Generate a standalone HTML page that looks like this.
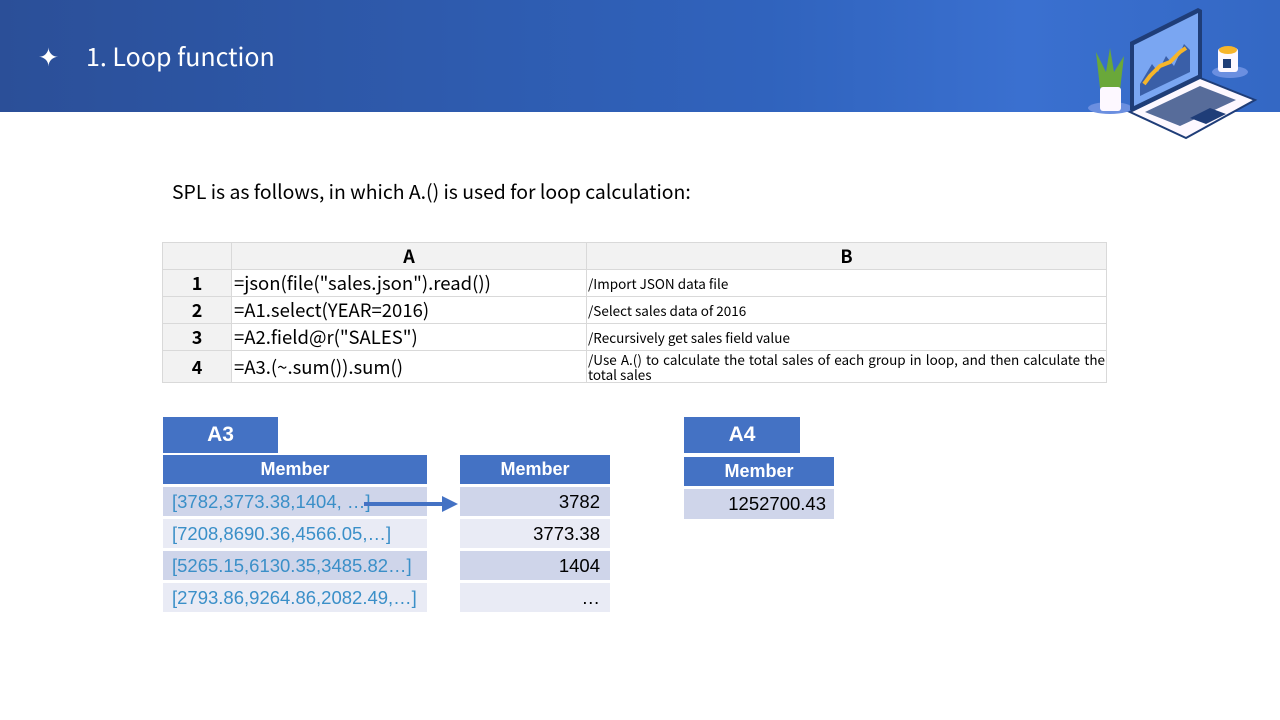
<!DOCTYPE html>
<html><head><meta charset="utf-8"><style>
*{margin:0;padding:0;box-sizing:border-box}
body{width:1280px;height:720px;background:#fff;position:relative;overflow:hidden;font-family:"Liberation Sans","Noto Sans CJK SC",sans-serif}
.hdr{position:absolute;left:0;top:0;width:1280px;height:112px;background:linear-gradient(90deg,#2b4f98 0%,#3063bd 60%,#3a70d0 80%,#3468c4 100%)}
.ttl{position:absolute;left:38px;top:38px;color:#fff;font-size:25px;font-family:"Noto Sans CJK SC","Liberation Sans",sans-serif}
.a{position:absolute}
table.g{position:absolute;left:162px;top:242px;border-collapse:collapse;font-family:"Noto Sans CJK SC","Liberation Sans",sans-serif;table-layout:fixed}
table.g td{border:1px solid #d9d9d9;padding:0 2px;height:27px;font-size:18.5px;color:#000;vertical-align:middle;overflow:hidden;white-space:nowrap}
table.g tr:first-child td{background:#f2f2f2;font-weight:bold;text-align:center;font-size:18px}
table.g td.n{background:#f2f2f2;text-align:center;font-weight:bold;font-size:18px}
table.g td.c{font-size:13.5px;line-height:15px;padding:0 1px;white-space:normal}
.blue{background:#4472c4;color:#fff;font-weight:bold;text-align:center;position:absolute}
.cell{position:absolute;font-size:18.5px;line-height:29px}
.d{background:#cfd5ea}.l{background:#e9ebf5}
</style></head><body>
<div class="hdr"></div>
<div class="ttl"><span style="position:absolute;left:0">✦</span><span style="position:absolute;left:48px;white-space:nowrap">1. Loop function</span></div>
<svg class="a" style="left:1085px;top:5px" width="175" height="138" viewBox="1085 5 175 138">
<ellipse cx="1110" cy="108" rx="22" ry="6" fill="#6b8fe0"/>
<ellipse cx="1230" cy="72" rx="18" ry="6" fill="#6b8fe0"/>
<path d="M1100 88 L1096 52 L1106 72 L1110 48 L1114 72 L1124 56 L1120 90Z" fill="#6aa83a"/>
<rect x="1100" y="87" width="21" height="24" rx="3" fill="#fdf8ff"/>
<path d="M1130 42 L1198 8 L1202 10 L1202 78 L1134 112 L1130 110Z" fill="#1f3d78"/>
<path d="M1134 45 L1198 13 L1198 75 L1134 106Z" fill="#7aa6f2"/>
<path d="M1140 84 L1152 64 L1158 72 L1166 56 L1174 66 L1184 44 L1190 50 L1190 72 L1140 96Z" fill="#3a5fa8"/>
<path d="M1144 84 L1150 76 L1160 66 L1170 62 L1180 52 L1186 48" stroke="#f6b52a" stroke-width="4" fill="none"/>
<path d="M1130 112 L1200 78 L1255 100 L1186 138 Z" fill="#fdf8ff" stroke="#1f3d78" stroke-width="2"/>
<path d="M1145 112 L1200 86 L1236 100 L1180 126Z" fill="#1f3d78" opacity=".75"/>
<path d="M1190 118 L1210 108 L1226 114 L1206 124Z" fill="#1f3d78"/>
<rect x="1218" y="48" width="20" height="24" rx="3" fill="#fdf8ff"/>
<ellipse cx="1228" cy="50" rx="9" ry="4" fill="#f6b52a"/>
<rect x="1223" y="59" width="8" height="9" fill="#1f3d78"/>
</svg>
<div class="a" style="left:172px;top:178px;font-size:19.4px;font-family:'Noto Sans CJK SC','Liberation Sans',sans-serif;line-height:26px;white-space:nowrap">SPL is as follows, in which A.() is used for loop calculation:</div>
<table class="g">
<colgroup><col style="width:69px"><col style="width:355px"><col style="width:520px"></colgroup>
<tr><td></td><td>A</td><td>B</td></tr>
<tr><td class="n">1</td><td>=json(file("sales.json").read())</td><td class="c">/Import JSON data file</td></tr>
<tr><td class="n">2</td><td>=A1.select(YEAR=2016)</td><td class="c">/Select sales data of 2016</td></tr>
<tr><td class="n">3</td><td>=A2.field@r("SALES")</td><td class="c">/Recursively get sales field value</td></tr>
<tr><td class="n" style="height:32px">4</td><td>=A3.(~.sum()).sum()</td><td class="c" style="text-align:justify;text-align-last:left">/Use A.() to calculate the total sales of each group in loop, and then calculate the total sales</td></tr>
</table>

<div class="blue" style="left:163px;top:417px;width:115px;height:36px;font-size:21px;line-height:36px">A3</div>
<div class="blue" style="left:163px;top:455px;width:264px;height:29px;font-size:18px;line-height:29px">Member</div>
<div class="cell d" style="left:163px;top:487px;width:264px;height:29px;color:#3a8fc8;padding-left:9px">[3782,3773.38,1404, …]</div>
<div class="cell l" style="left:163px;top:519px;width:264px;height:29px;color:#3a8fc8;padding-left:9px">[7208,8690.36,4566.05,…]</div>
<div class="cell d" style="left:163px;top:551px;width:264px;height:29px;color:#3a8fc8;padding-left:9px">[5265.15,6130.35,3485.82…]</div>
<div class="cell l" style="left:163px;top:583px;width:264px;height:29px;color:#3a8fc8;padding-left:9px">[2793.86,9264.86,2082.49,…]</div>

<div class="blue" style="left:460px;top:455px;width:150px;height:29px;font-size:18px;line-height:29px">Member</div>
<div class="cell d" style="left:460px;top:487px;width:150px;height:29px;text-align:right;padding-right:10px">3782</div>
<div class="cell l" style="left:460px;top:519px;width:150px;height:29px;text-align:right;padding-right:10px">3773.38</div>
<div class="cell d" style="left:460px;top:551px;width:150px;height:29px;text-align:right;padding-right:10px">1404</div>
<div class="cell l" style="left:460px;top:583px;width:150px;height:29px;text-align:right;padding-right:10px">…</div>
<svg class="a" style="left:360px;top:494px" width="100" height="20"><rect x="4" y="8" width="80" height="4" fill="#4472c4"/><path d="M82 2 L98 10 L82 18Z" fill="#4472c4"/></svg>

<div class="blue" style="left:684px;top:417px;width:116px;height:36px;font-size:21px;line-height:36px">A4</div>
<div class="blue" style="left:684px;top:457px;width:150px;height:29px;font-size:18px;line-height:29px">Member</div>
<div class="cell d" style="left:684px;top:489px;width:150px;height:30px;text-align:right;padding-right:8px;line-height:30px">1252700.43</div>
</body></html>
